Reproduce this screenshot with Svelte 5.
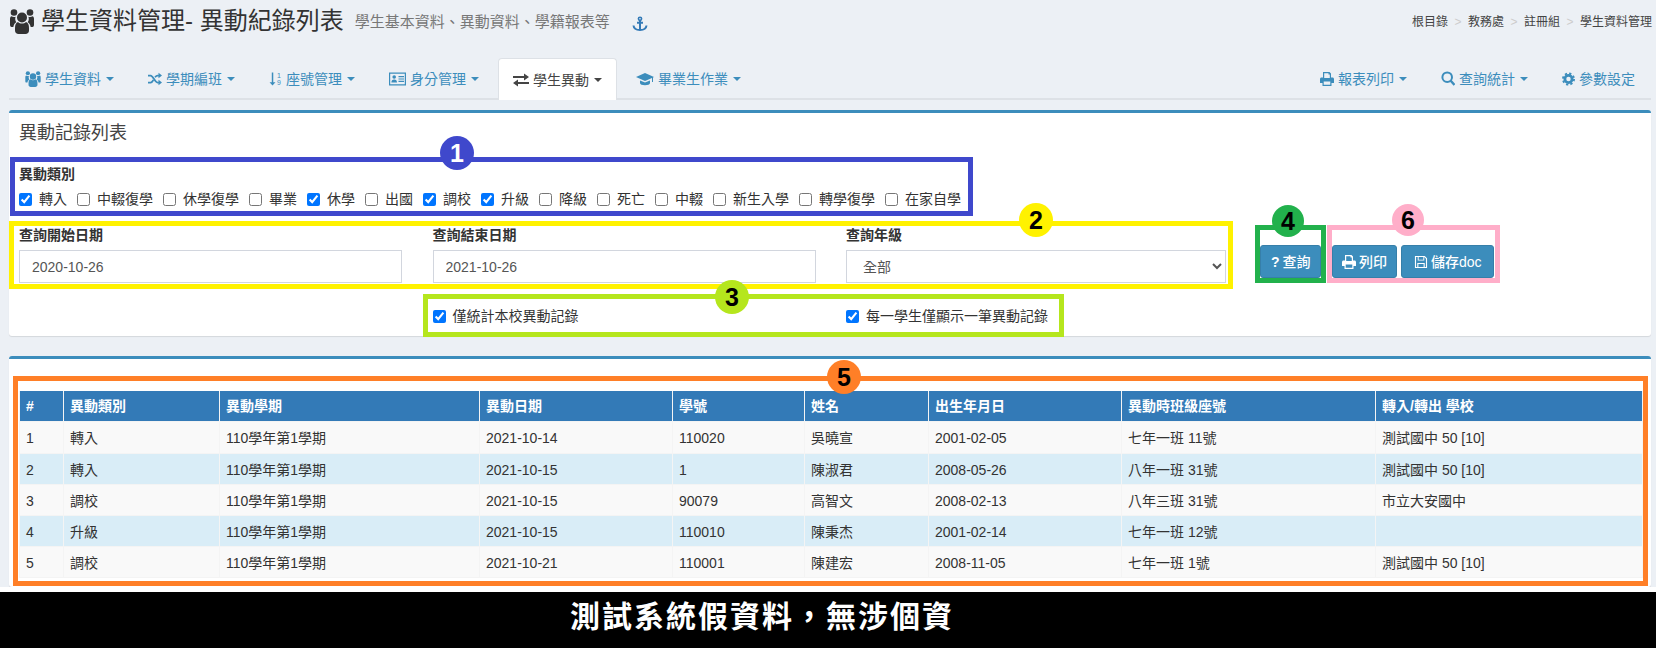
<script lang="ts">
	const icons: Record<string, string> = {
		users:
			'<circle cx="4" cy="3.500" r="3.300"/><circle cx="20" cy="3.500" r="3.300"/><circle cx="12" cy="8.500" r="5"/><path d="M5 19c0-3 1-5.500 3-6 1 1 2.500 1.600 4 1.600s3-.6 4-1.600c2 .5 3 3 3 6v2.500c0 2-1.500 3.500-3.500 3.500h-7C6.500 25 5 23.500 5 21.500z"/><path d="M0 10c0-1.500.5-2.500 1.500-2.800.8.500 1.500.800 2.500.800.600 0 1.200-.1 1.700-.3-.3.700-.5 1.500-.5 2.300 0 1.200.4 2.300 1.100 3.200-1.500.9-2.600 2.500-3 4.800H1.500C.5 18 0 17 0 15.500z"/><path transform="matrix(-1 0 0 1 24 0)" d="M0 10c0-1.500.5-2.500 1.500-2.800.8.500 1.500.800 2.500.800.600 0 1.200-.1 1.700-.3-.3.700-.5 1.500-.5 2.300 0 1.200.4 2.300 1.100 3.200-1.500.9-2.600 2.500-3 4.800H1.500C.5 18 0 17 0 15.500z"/>',
		random:
			'<path d="M0 4h3c3 0 4.500 8 8 8h1.500" fill="none" stroke="currentColor" stroke-width="2"/><path d="M0 12h3c1.300 0 2.300-1.200 3.200-2.800M8 6c.8-1 1.800-2 3-2h1.500" fill="none" stroke="currentColor" stroke-width="2"/><path d="M12 .8 16 4l-4 3.200zM12 8.800l4 3.200-4 3.200z"/>',
		exchange: '<path d="M0 4h11V1.500L16 5l-5 3.500V6H0zM16 10H5V7.500L0 11l5 3.500V12h11z"/>',
		vcard:
			'<path fill-rule="evenodd" d="M0 1.500h17v13H0zM1.200 2.700v10.600h14.600V2.700z"/><circle cx="5.200" cy="6" r="1.800"/><path d="M2.400 11.500c0-1.800 1-2.900 2.800-2.900s2.800 1.100 2.800 2.900zM9.500 5h5.500v1.200H9.500zM9.500 7.400h5.500v1.200H9.500zM9.500 9.800h5.500V11H9.500z"/>',
		cap: '<path d="M9 2 0 6l9 4 7-3.100V11h1V6.400L18 6zM4 9.400V12c0 1.300 2.300 2.300 5 2.300s5-1 5-2.300V9.400l-5 2.200z"/>',
		print:
			'<path fill-rule="evenodd" d="M3 1h6.500L11 2.500V6.500h1.500c.8 0 1.500.7 1.500 1.500v4h-2.500v3h-9v-3H0V8c0-.8.7-1.500 1.500-1.500H3zM4.200 2.200v4.800h5.600V3.500H8.500V2.200zM3.700 10.500v3.300h6.600v-3.300z"/>',
		search:
			'<circle cx="6.200" cy="6.200" r="4.800" fill="none" stroke="currentColor" stroke-width="2"/><path d="m9.500 9.500 4 4.500" fill="none" stroke="currentColor" stroke-width="2.400"/>',
		cog: '<circle cx="7" cy="8" r="3.900" fill="none" stroke="currentColor" stroke-width="3"/><circle cx="7" cy="8" r="6" fill="none" stroke="currentColor" stroke-width="2" stroke-dasharray="2.400 2.312"/>',
		save: '<path fill-rule="evenodd" d="M1 1.500h10.500L14 4v10.500H1zM2.200 2.700v10.600h1.300V9h8v4.300h1.300V4.500L11 2.700v3.800H4V2.700zM5 2.700v2.800h5V2.700zM4.700 10.200v3.100h5.600v-3.100z"/>',
		anchor:
			'<circle cx="8" cy="2.800" r="1.600" fill="none" stroke="currentColor" stroke-width="1.600"/><path d="M8 4.300V14M5 6.800h6M1.500 9.500c.3 2.800 3 4.500 6.500 4.500s6.200-1.700 6.500-4.500" fill="none" stroke="currentColor" stroke-width="2"/>',
		sort: '<path d="M3 1h1.600v10.500H7L3.800 15 .6 11.500H3z"/><text x="8.500" y="6.500" font-size="7.500">1</text><text x="8.500" y="15" font-size="7.500">9</text>'
	};

	const leftTabs = [
		{ icon: 'users', w: 16, vb: '0 0 24 25', label: '學生資料' },
		{ icon: 'random', w: 14, vb: '0 0 16 16', label: '學期編班' },
		{ icon: 'sort', w: 13, vb: '0 0 14 16', label: '座號管理' },
		{ icon: 'vcard', w: 17, vb: '0 0 17 16', label: '身分管理' },
		{ icon: 'exchange', w: 16, vb: '0 0 16 16', label: '學生異動', active: true },
		{ icon: 'cap', w: 18, vb: '0 0 18 16', label: '畢業生作業' }
	];
	const rightTabs = [
		{ icon: 'print', w: 14, vb: '0 0 14 16', label: '報表列印', caret: true },
		{ icon: 'search', w: 14, vb: '0 0 14 16', label: '查詢統計', caret: true },
		{ icon: 'cog', w: 13, vb: '0 0 14 16', label: '參數設定', caret: false }
	];
	const kinds = [
		['轉入', true],
		['中輟復學', false],
		['休學復學', false],
		['畢業', false],
		['休學', true],
		['出國', false],
		['調校', true],
		['升級', true],
		['降級', false],
		['死亡', false],
		['中輟', false],
		['新生入學', false],
		['轉學復學', false],
		['在家自學', false]
	];
	const headers = ['#', '異動類別', '異動學期', '異動日期', '學號', '姓名', '出生年月日', '異動時班級座號', '轉入/轉出 學校'];
	const rows = [
		['1', '轉入', '110學年第1學期', '2021-10-14', '110020', '吳曉宣', '2001-02-05', '七年一班 11號', '測試國中 50 [10]'],
		['2', '轉入', '110學年第1學期', '2021-10-15', '1', '陳淑君', '2008-05-26', '八年一班 31號', '測試國中 50 [10]'],
		['3', '調校', '110學年第1學期', '2021-10-15', '90079', '高智文', '2008-02-13', '八年三班 31號', '市立大安國中'],
		['4', '升級', '110學年第1學期', '2021-10-15', '110010', '陳秉杰', '2001-02-14', '七年一班 12號', ''],
		['5', '調校', '110學年第1學期', '2021-10-21', '110001', '陳建宏', '2008-11-05', '七年一班 1號', '測試國中 50 [10]']
	];
	const colWidths = [44, 156, 260, 193, 132, 124, 193, 254, 267];
</script>

{#snippet icon(name: string, w: number, vb: string)}
	<svg class="icon" width={w} height="16" viewBox={vb} fill="currentColor">{@html icons[name]}</svg>
{/snippet}

<div class="page">
	<header class="top">
		<h1>
			<svg class="title-icon" width="26" height="25" viewBox="0 0 24 25" fill="currentColor">{@html icons.users}</svg>
			學生資料管理- 異動紀錄列表
			<small>學生基本資料、異動資料、學籍報表等</small>
			<svg class="anchor" width="16" height="16" viewBox="0 0 16 16">{@html icons.anchor}</svg>
		</h1>
		<ol class="crumbs">
			<li>根目錄</li>
			<li>教務處</li>
			<li>註冊組</li>
			<li>學生資料管理</li>
		</ol>
	</header>

	<nav class="tabs">
		{#each leftTabs as t}
			<a class="tab" class:active={t.active}>
				{@render icon(t.icon, t.w, t.vb)}{t.label}<span class="caret"></span>
			</a>
		{/each}
		<span class="spacer"></span>
		{#each rightTabs as t}
			<a class="tab">
				{@render icon(t.icon, t.w, t.vb)}{t.label}{#if t.caret}<span class="caret"></span>{/if}
			</a>
		{/each}
	</nav>

	<section class="card search-card">
		<h3>異動記錄列表</h3>
		<div class="field-label">異動類別</div>
		<div class="kinds">
			{#each kinds as [name, on]}
				<label class="check"><input type="checkbox" checked={on as boolean} />{name}</label>
			{/each}
		</div>
		<div class="query-row">
			<div class="fields">
				<div>
					<div class="field-label">查詢開始日期</div>
					<input class="control" type="text" value="2020-10-26" />
				</div>
				<div>
					<div class="field-label">查詢結束日期</div>
					<input class="control" type="text" value="2021-10-26" />
				</div>
				<div>
					<div class="field-label">查詢年級</div>
					<select class="control"><option>全部</option></select>
				</div>
			</div>
			<div class="actions">
				<button class="btn first"><b class="q">?</b>查詢</button>
				<button class="btn print">{@render icon('print', 14, '0 0 14 16')}列印</button>
				<button class="btn">{@render icon('save', 14, '0 0 15 16')}儲存doc</button>
			</div>
		</div>
		<div class="fields options">
			<span></span>
			<label class="check"><input type="checkbox" checked />僅統計本校異動記錄</label>
			<label class="check"><input type="checkbox" checked />每一學生僅顯示一筆異動記錄</label>
		</div>
	</section>

	<section class="card result-card">
		<table>
			<colgroup>
				{#each colWidths as w}<col width={w} />{/each}
			</colgroup>
			<thead>
				<tr>
					{#each headers as h}<th>{h}</th>{/each}
				</tr>
			</thead>
			<tbody>
				{#each rows as row}
					<tr>
						{#each row as cell}<td>{cell}</td>{/each}
					</tr>
				{/each}
			</tbody>
		</table>
	</section>

	<div class="gap"></div>
	<footer class="notice">測試系統假資料，無涉個資</footer>

	<!-- annotation marks drawn over the screenshot -->
	<div class="mark box-1"></div>
	<div class="mark box-2"></div>
	<div class="mark box-3"></div>
	<div class="mark box-4"></div>
	<div class="mark box-6"></div>
	<div class="mark box-5"></div>
	<div class="badge b1">1</div>
	<div class="badge b2">2</div>
	<div class="badge b3">3</div>
	<div class="badge b4">4</div>
	<div class="badge b5">5</div>
	<div class="badge b6">6</div>
</div>

<style>
	:global(body) {
		background: #ecf0f5;
	}

	.page {
		position: relative;
		width: 1656px;
		height: 648px;
		overflow: hidden;
		display: flex;
		flex-direction: column;
		background: #ecf0f5;
		color: #333;
		font-family: 'Liberation Sans', 'Noto Sans CJK TC', sans-serif;
		font-size: 14px;
		line-height: 20px;
	}

	.top {
		height: 58px;
		flex: none;
		display: flex;
		justify-content: space-between;
		padding: 8px 4px 0 9px;
		box-sizing: border-box;
	}

	h1 {
		margin: 0;
		font-size: 24px;
		font-weight: 400;
		line-height: 26px;
		display: flex;
		align-items: center;
		height: 26px;
	}

	.title-icon {
		margin-right: 6px;
	}

	small {
		font-size: 15px;
		color: #777;
		margin-left: 11px;
		margin-top: 2px;
	}

	.anchor {
		color: #337ab7;
		margin-left: 22px;
		margin-top: 5px;
	}

	.crumbs {
		list-style: none;
		margin: 4px 0 0;
		padding: 0;
		display: flex;
		font-size: 12px;
		line-height: 20px;
		color: #444;
	}

	.crumbs li + li::before {
		content: '>';
		color: #ccc;
		padding: 0 6.500px;
	}

	.tabs {
		display: flex;
		height: 42px;
		flex: none;
		margin: 0 5px 0 9px;
		padding: 0 1px;
		box-sizing: border-box;
		border-bottom: 2px solid #dde1e6;
	}

	.tab {
		display: flex;
		align-items: center;
		height: 42px;
		box-sizing: border-box;
		padding: 0 15px;
		margin-right: 4px;
		color: #3c8dbc;
		border-radius: 4px 4px 0 0;
	}

	.tab:last-child {
		margin-right: 0;
	}

	.tab.active {
		background: #fff;
		color: #444;
		padding: 0 14px;
		border: 1px solid #dde1e6;
		border-bottom: 0;
	}

	.spacer {
		flex: 1;
	}

	.icon {
		margin-right: 4px;
		flex: none;
	}

	.caret {
		margin-left: 5px;
		border-top: 4px solid currentColor;
		border-left: 4px solid transparent;
		border-right: 4px solid transparent;
	}

	.card {
		background: #fff;
		margin: 0 5px 0 9px;
		border-top: 3px solid #3c8dbc;
		border-radius: 3px;
		box-shadow: 0 1px 1px rgba(0, 0, 0, 0.1);
		flex: none;
		box-sizing: border-box;
	}

	.search-card {
		margin-top: 10px;
		height: 226px;
		padding: 10px 10px 0;
	}

	h3 {
		margin: 0 0 21px;
		font-size: 18px;
		font-weight: 400;
		line-height: 20px;
		color: #444;
	}

	.field-label {
		font-weight: 700;
		margin-bottom: 5px;
	}

	.kinds {
		display: flex;
		gap: 10px;
		margin: 1px 0 16px;
	}

	.check {
		display: flex;
		align-items: center;
		white-space: nowrap;
	}

	.check input {
		margin: 0 7px 0 0;
		width: 13px;
		height: 13px;
	}

	.query-row {
		display: flex;
	}

	.fields {
		display: grid;
		grid-template-columns: 383px 383px 380px;
		column-gap: 30.5px;
	}

	.control {
		display: block;
		width: 100%;
		height: 33px;
		box-sizing: border-box;
		border: 1px solid #d2d6de;
		border-radius: 0;
		padding: 0 12px;
		background: #fff;
		color: #555;
		font: inherit;
	}

	.actions {
		display: flex;
		align-items: flex-end;
		gap: 4px;
		margin-left: 34px;
		padding-bottom: 5px;
	}

	.btn {
		display: flex;
		align-items: center;
		height: 33px;
		box-sizing: border-box;
		padding: 0 11px 0 12px;
		background: #3c8dbc;
		color: #fff;
		border: 1px solid #367fa9;
		border-radius: 3px;
		font: inherit;
		font-weight: 500;
		white-space: nowrap;
	}

	.btn .icon {
		margin-right: 3px;
	}

	.btn.first {
		width: 61px;
		padding: 0 0 0 10px;
		margin-right: 7px;
	}

	.btn.print {
		padding: 0 9px;
	}

	.q {
		margin-right: 3px;
	}

	.options {
		margin-top: 23px;
	}

	.result-card {
		margin-top: 20px;
		height: 231px;
		padding: 32px 9px 0 10px;
	}

	table {
		border-collapse: collapse;
		table-layout: fixed;
		width: 1623px;
	}

	th {
		height: 30px;
		padding: 1px 6px 0;
		background: #337ab7;
		color: #fff;
		text-align: left;
		font-weight: 700;
		border: 1px solid #f4f4f4;
		border-top: 0;
		box-sizing: border-box;
	}

	td {
		height: 31px;
		padding: 2px 6px 0;
		color: #333;
		border: 1px solid #f4f4f4;
		box-sizing: border-box;
	}

	tbody tr:first-child td {
		height: 32px;
	}

	tbody tr:nth-child(odd) {
		background: #f9f9f9;
	}

	tbody tr:nth-child(even) {
		background: #d9edf7;
	}

	.gap {
		height: 5px;
		background: #fff;
		flex: none;
	}

	.notice {
		flex: 1;
		background: #000;
		color: #fff;
		display: flex;
		align-items: center;
		justify-content: center;
		font-size: 30px;
		font-weight: 700;
		letter-spacing: 2px;
		padding: 0 132px 6px 0;
		box-sizing: border-box;
	}

	.mark {
		position: absolute;
		box-sizing: border-box;
		border: 5px solid;
	}

	.box-1 { left: 10px; top: 157px; width: 963px; height: 59px; border-color: #3f48cc; }
	.box-2 { left: 9px; top: 221px; width: 1224px; height: 68px; border-color: #fff200; }
	.box-3 { left: 423px; top: 294px; width: 641px; height: 43px; border-color: #b5e61d; }
	.box-4 { left: 1255px; top: 225px; width: 71px; height: 58px; border-color: #22b14c; }
	.box-6 { left: 1327px; top: 225px; width: 173px; height: 58px; border-color: #ffaec9; }
	.box-5 { left: 13px; top: 376px; width: 1635px; height: 210px; border-color: #ff7f27; }

	.badge {
		position: absolute;
		width: 34px;
		height: 34px;
		border-radius: 50%;
		display: flex;
		align-items: center;
		justify-content: center;
		font-size: 25px;
		font-weight: 700;
		color: #000;
	}

	.b1 { left: 440px; top: 136px; background: #3f48cc; color: #fff; }
	.b2 { left: 1019px; top: 203px; background: #fff200; }
	.b3 { left: 715px; top: 280px; background: #b5e61d; }
	.b4 { left: 1272px; top: 205px; background: #22b14c; width: 32px; height: 32px; }
	.b5 { left: 827px; top: 360px; background: #ff7f27; }
	.b6 { left: 1392px; top: 204px; background: #ffaec9; width: 32px; height: 32px; }
</style>
